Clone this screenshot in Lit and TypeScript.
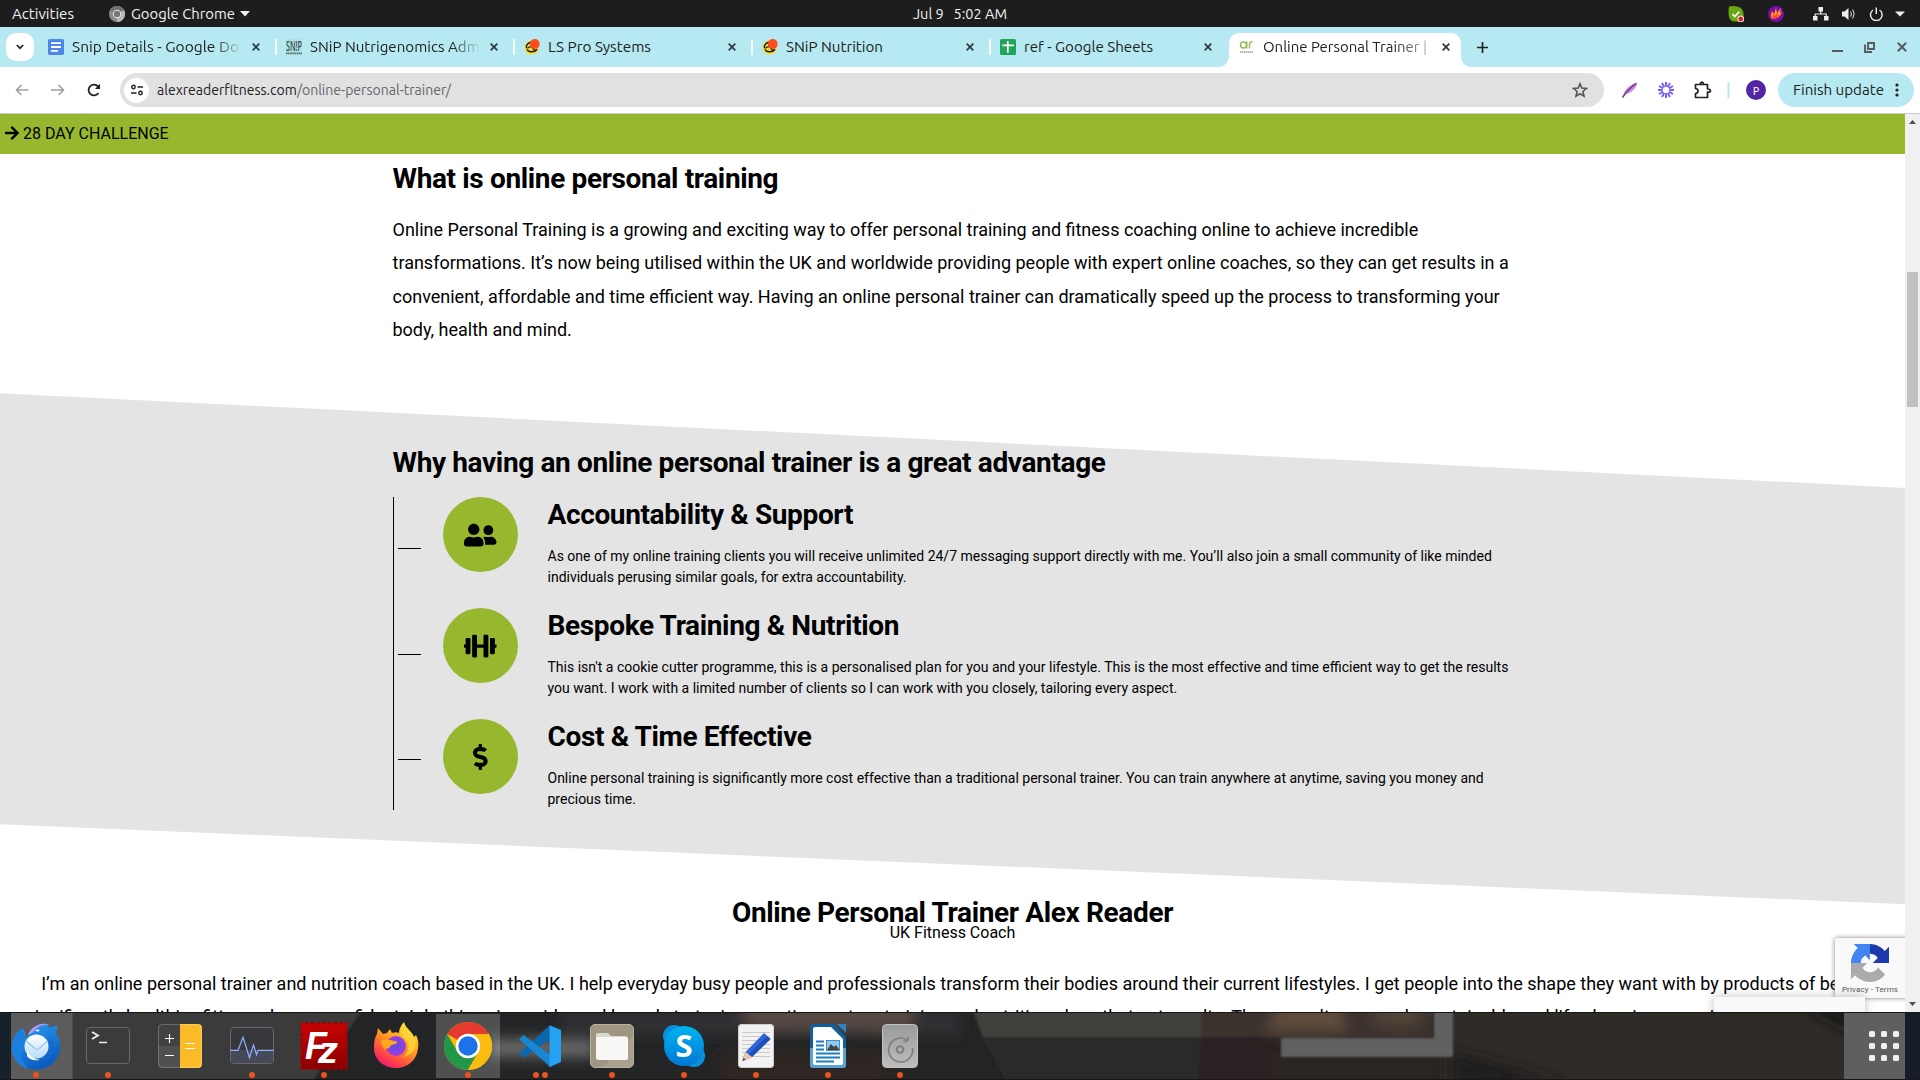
import { LitElement, html, svg, css, nothing } from "lit";
import { customElement } from "lit/decorators.js";

/* A UI label whose advance width is fixed, so the shell text keeps its metrics. */
const label = (text: string, width: number, opts: { size?: number; fill?: string; h?: number } = {}) => {
  const { size = 14.5, fill = "#202124", h = 20 } = opts;
  return html`<svg class="label" width=${width} height=${h} viewBox="0 0 ${width} ${h}">
    <text x="0" y=${h / 2 + 5} textLength=${width} lengthAdjust="spacingAndGlyphs" font-size=${size} fill=${fill} xml:space="preserve">${text}</text>
  </svg>`;
};

const icon = (w: number, h: number, vb: string, body: unknown) =>
  html`<svg class="ic" width=${w} height=${h} viewBox=${vb}>${body}</svg>`;

const closeX = (c = "#2b3a3e") =>
  icon(8, 8, "0 0 8 8", svg`<path d="M.7.7l6.6 6.6M7.3.7L.7 7.3" stroke=${c} stroke-width="1.7"/>`);

const docsIcon = icon(16, 16, "0 0 16 16", svg`<rect width="16" height="16" rx="1.5" fill="#4f86ec"/>
  <path d="M3 4.2h10M3 8h10M3 11.8h7" stroke="#fff" stroke-width="1.8"/>`);
const snipIcon = icon(16, 16, "0 0 16 16", svg`<rect width="16" height="16" fill="#a9dfd9" opacity=".6"/>
  <text x="0" y="11.5" font-size="15" font-weight="500" textLength="16" lengthAdjust="spacingAndGlyphs" fill="#32444a">SN!P</text>
  <path d="M0 14.4h16" stroke="#5b6f73" stroke-width="1.6" stroke-dasharray="1.6 .5"/>`);
const lsIcon = icon(16, 16, "0 0 16 16", svg`<circle cx="7.600" cy="8.600" r="7.200" fill="#f8dd3a"/>
  <path d="M7 3C2.500 4.500 1 8.500 3.500 9.300M3 10.500C4 13 10 14 13 10.500M4 9q3-3 5 .5t4 .5" fill="none" stroke="#1d1d1b" stroke-width="1.400"/>
  <circle cx="10.800" cy="5" r="4.900" fill="#fb4d1d"/>`);
const sheetsIcon = icon(16, 16, "0 0 16 16", svg`<rect width="16" height="16" rx="1.500" fill="#23a559"/>
  <path d="M2.500 6.300h11.500M7.800 2.300v11.500" stroke="#fff" stroke-width="1.700"/>`);
const arIcon = icon(16, 14, "0 0 16 14", svg`<circle cx="4.500" cy="5" r="3" fill="none" stroke="#9aba5a" stroke-width="1.500"/>
  <path d="M7.700 1.500v7M10.500 8.500V4q0-2.300 3-2.200" fill="none" stroke="#9aba5a" stroke-width="1.500"/>
  <path d="M1 11.900h13" stroke="#b5b5b5" stroke-width="2" stroke-dasharray="1.500 .5"/>`);

interface Tab { icon: unknown; text: string; w: number; fade?: boolean; active?: boolean; sep?: boolean }
const tabs: Tab[] = [
  { icon: docsIcon, text: "Snip Details - Google Docs", w: 181, fade: true, sep: true },
  { icon: snipIcon, text: "SNiP Nutrigenomics Admin", w: 182, fade: true, sep: true },
  { icon: lsIcon, text: "LS Pro Systems", w: 103, sep: true },
  { icon: lsIcon, text: "SNiP Nutrition", w: 97, sep: true },
  { icon: sheetsIcon, text: "ref - Google Sheets", w: 129 },
  { icon: arIcon, text: "Online Personal Trainer |", w: 164, fade: true, active: true },
];

const fa = {
  arrow: "M190.5 66.9l22.2-22.2c9.4-9.4 24.6-9.4 33.9 0L441 239c9.4 9.4 9.4 24.6 0 33.9L246.6 467.3c-9.4 9.4-24.6 9.4-33.9 0l-22.2-22.2c-9.5-9.5-9.3-25 .4-34.3L311.4 296H24c-13.3 0-24-10.7-24-24v-32c0-13.3 10.7-24 24-24h287.4L190.9 101.2c-9.8-9.3-10-24.8-.4-34.3z",
  friends: "M192 256c61.9 0 112-50.1 112-112S253.9 32 192 32 80 82.1 80 144s50.1 112 112 112zm76.8 32h-8.3c-20.8 10-43.9 16-68.5 16s-47.6-6-68.5-16h-8.3C51.6 288 0 339.6 0 403.2V432c0 26.5 21.5 48 48 48h288c26.5 0 48-21.5 48-48v-28.8c0-63.6-51.6-115.2-115.2-115.2zM480 256c53 0 96-43 96-96s-43-96-96-96-96 43-96 96 43 96 96 96zm48 32h-3.8c-13.9 4.8-28.6 8-44.2 8s-30.3-3.2-44.2-8H432c-20.4 0-39.2 5.9-55.700 15.4 24.4 26.3 39.7 61.2 39.7 99.8v38.4c0 2.200-.5 4.300-.6 6.400H592c26.5 0 48-21.5 48-48 0-61.900-50.100-112-112-112z",
  dumbbell: "M104 96H56c-13.3 0-24 10.7-24 24v104H8c-4.4 0-8 3.6-8 8v48c0 4.4 3.6 8 8 8h24v104c0 13.3 10.7 24 24 24h48c13.3 0 24-10.7 24-24V120c0-13.3-10.7-24-24-24zm528 128h-24V120c0-13.3-10.7-24-24-24h-48c-13.3 0-24 10.7-24 24v272c0 13.3 10.7 24 24 24h48c13.3 0 24-10.7 24-24V288h24c4.4 0 8-3.6 8-8v-48c0-4.4-3.6-8-8-8zM456 32h-48c-13.3 0-24 10.7-24 24v168H256V56c0-13.3-10.7-24-24-24h-48c-13.3 0-24 10.7-24 24v400c0 13.3 10.7 24 24 24h48c13.3 0 24-10.7 24-24V288h128v168c0 13.3 10.7 24 24 24h48c13.3 0 24-10.7 24-24V56c0-13.3-10.7-24-24-24z",
  dollar: "M209.2 233.4l-108-31.6C88.7 198.2 80 186.5 80 173.5c0-16.3 13.2-29.5 29.5-29.5h66.3c12.2 0 24.2 3.7 34.2 10.5 6.1 4.1 14.3 3.1 19.5-2l34.8-34c7.1-6.9 6.1-18.4-1.8-24.5C238 74.8 207.4 64.1 176 64V16c0-8.8-7.2-16-16-16h-32c-8.8 0-16 7.2-16 16v48h-2.5C45.8 64-5.4 118.7.5 183.6c4.2 46.1 39.4 83.6 83.8 96.6l102.5 30c12.5 3.7 21.2 15.3 21.2 28.3 0 16.3-13.2 29.5-29.5 29.5h-66.3C100 368 88 364.3 78 357.5c-6.1-4.1-14.3-3.1-19.5 2l-34.8 34c-7.1 6.9-6.1 18.4 1.8 24.5 24.5 19.2 55.1 29.9 86.5 30v48c0 8.8 7.2 16 16 16h32c8.8 0 16-7.2 16-16v-48.2c46.6-.9 90.3-28.6 105.7-72.7 21.5-61.6-14.6-124.8-72.5-141.7z",
};

const benefits = [
  { vb: "0 0 640 512", w: 32.5, d: fa.friends, title: "Accountability & Support",
    lines: ["As one of my online training clients you will receive unlimited 24/7 messaging support directly with me. You’ll also join a small community of like minded", "individuals perusing similar goals, for extra accountability."] },
  { vb: "0 0 640 512", w: 32.5, d: fa.dumbbell, title: "Bespoke Training & Nutrition",
    lines: ["This isn't a cookie cutter programme, this is a personalised plan for you and your lifestyle. This is the most effective and time efficient way to get the results", "you want. I work with a limited number of clients so I can work with you closely, tailoring every aspect."] },
  { vb: "0 0 288 512", w: 14.625, d: fa.dollar, title: "Cost & Time Effective",
    lines: ["Online personal training is significantly more cost effective than a traditional personal trainer. You can train anywhere at anytime, saving you money and", "precious time."] },
];

const dockIcons: { body: unknown; dots: number; cls?: string }[] = [
  { dots: 1, body: svg`<defs><linearGradient id="tb" x1="0" y1="0" x2=".5" y2="1"><stop offset="0" stop-color="#2aa3f4"/><stop offset="1" stop-color="#0b5cc0"/></linearGradient>
    <linearGradient id="tw" x1="0" y1="0" x2="0" y2="1"><stop offset="0" stop-color="#fff"/><stop offset="1" stop-color="#b5dcf8"/></linearGradient></defs>
    <path d="M16 13C20 4 29 0 37 2.500l-1 3 10-2-2 7c3 4 4 9 4 14 0 13-10 23-24 23S0 38 0 26C0 20 3 11 10 6.500c4 3 4 7 3 11z" fill="url(#tb)"/>
    <path d="M10 6.500C4 9 0 17 0 26c0 12 8 19 17 21C9 41 8 32 10 25c3-6 4-12 0-18.500z" fill="#1b7fe0"/>
    <path d="M16 13C19 4 29 0 37 2.500c-8 0-13 3-16 8z" fill="#b795ea"/>
    <circle cx="24.500" cy="24.500" r="12" fill="url(#tw)"/><path d="M14 19l9.500 8q1.500 1 3 0l9-8" fill="none" stroke="#9cc2e4" stroke-width="1.200"/>
    <path d="M15 34c3 4 7 5 13 4-6-1-10-4-13-8z" fill="#fff"/>
    <path d="M36 16c4 10 1 18-8 22 11-1 16-9 14-17z" fill="#1568cf"/><ellipse cx="25.500" cy="8.400" rx="2" ry="1" fill="#dff"/>` },
  { dots: 1, body: svg`<rect x="2.500" y="5.500" width="43" height="36" rx="3.500" fill="#3b3b3b" stroke="#696969"/>
    <path d="M8 10l6 3.500-6 3.500" fill="none" stroke="#eee" stroke-width="1.800"/><path d="M15 20.500h8" stroke="#eee" stroke-width="1.500"/>` },
  { dots: 0, body: svg`<path d="M6 2h18v44H6a4 4 0 0 1-4-4V6a4 4 0 0 1 4-4z" fill="#505050"/><path d="M6 2h18v22H2V6a4 4 0 0 1 4-4z" fill="#424242"/>
    <path d="M24 2h18a4 4 0 0 1 4 4v36a4 4 0 0 1-4 4H24z" fill="#fbbb28"/><rect x="2.500" y="2.500" width="43" height="43" rx="4" fill="none" stroke="#fff" opacity=".22"/>
    <path d="M9 16.500h9M13.500 12v9M9 33.500h9M29 21.500h10M29 26.500h10" stroke="#fff" stroke-width="1.100"/>` },
  { dots: 1, body: svg`<rect x="2.500" y="5.500" width="43" height="36" rx="3.500" fill="#37383b" stroke="#696969"/><path d="M3 28h42v10a3 3 0 0 1-3 3H6a3 3 0 0 1-3-3z" fill="#464a58"/>
    <path d="M2 28.300h8l5-13 6.500 20.500L25.500 23l3 9.500 1.500-4.200h16" fill="none" stroke="#8fb0ff" stroke-width="1.200"/>` },
  { dots: 1, body: svg`<defs><linearGradient id="fz" x1="0" y1="0" x2="0" y2="1"><stop offset="0" stop-color="#c60303"/><stop offset="1" stop-color="#8c0000"/></linearGradient></defs>
    <rect x="1" y="1" width="46" height="46" fill="url(#fz)"/><rect x="1" y="1" width="46" height="46" fill="none" stroke="#a30000" stroke-width="2.800" stroke-dasharray="0 5.750" stroke-linecap="round"/>
    <text x="5" y="37" font-size="38" font-style="italic" font-weight="700" font-family="Liberation Sans, sans-serif" textLength="22" lengthAdjust="spacingAndGlyphs" fill="#fff">F</text>
    <text x="18" y="41" font-size="37" font-style="italic" font-weight="700" font-family="Liberation Sans, sans-serif" textLength="20" lengthAdjust="spacingAndGlyphs" fill="#fff">z</text>` },
  { dots: 0, body: svg`<defs><linearGradient id="ff" x1=".8" y1="0" x2=".2" y2="1"><stop offset="0" stop-color="#ffea3a"/><stop offset=".45" stop-color="#ff9a1c"/><stop offset=".8" stop-color="#ff3b4b"/><stop offset="1" stop-color="#e5177b"/></linearGradient>
    <radialGradient id="fg"><stop offset="0" stop-color="#5a4fe0"/><stop offset="1" stop-color="#a13ae0"/></radialGradient></defs>
    <path d="M6 6l5 6 4-1 3-4 2 4c3-1 5-1 7 0 0-4 2-8 5-11 1 6 8 9 10 15l2-2c2 4 3 8 2 13-1 12-10 20-22 20C11 46 2 37 2 26c0-7 1-11 3-14z" fill="url(#ff)"/>
    <circle cx="24" cy="24" r="10" fill="url(#fg)"/><path d="M9 19c4-3 9-1 13 0 2 0 4 1 3 2-2 2-5 1-7 3-1 5-4 0-4 4C11 26 9 23 9 19z" fill="#ffa51e"/>
    <path d="M32 1c-4 7-4 12 2 17 5 6 2 14-3 17 11-2 15-11 11-20-2-5-8-8-10-14z" fill="#ffd83a" opacity=".75"/>` },
  { dots: 1, cls: "current", body: svg`<circle cx="24" cy="24" r="24" fill="#fbbc05"/>
    <path d="M24 24L3.200 12A24 24 0 0 1 44.800 12z" fill="#e53a2e"/><path d="M3.200 12A24 24 0 0 0 24 48L34.400 30 24 24 13.600 30z" fill="#249647"/>
    <path d="M24 12h20.800A24 24 0 0 1 24 48l10.400-18z" fill="#fbbc12"/><circle cx="24" cy="24" r="12.200" fill="#fff"/><circle cx="24" cy="24" r="9.700" fill="#1c73e8"/>` },
  { dots: 2, body: svg`<path d="M34 3v14L7.500 36 3 31.500z" fill="#0a66ad"/>
    <path d="M3 17L7.500 13 35 33.500V45L33 44z" fill="#1787d2"/><path d="M33.500 3.200L45 8v32l-11.500 5z" fill="#26a2f2"/>` },
  { dots: 1, body: svg`<rect x="2.500" y="2.500" width="43" height="43" rx="4.500" fill="#9e9580" stroke="#b8b19f"/><path d="M45 14L15 45h27a3 3 0 0 0 3-3z" fill="#aaa28e"/>
    <path d="M8 13a2 2 0 0 1 2-2h10l3 3h14a3 3 0 0 1 3 3v3H8z" fill="#dcd9ce"/><rect x="8" y="15" width="32" height="23" rx="2.500" fill="#f9f8f6"/>` },
  { dots: 1, body: svg`<defs><linearGradient id="sk" x1="0" y1="0" x2="0" y2="1"><stop offset="0" stop-color="#00b4f0"/><stop offset="1" stop-color="#0078d4"/></linearGradient></defs>
    <circle cx="14" cy="14" r="11" fill="#0a8fdd"/><circle cx="34" cy="34" r="11" fill="#0a8fe0"/><circle cx="24" cy="24" r="20" fill="url(#sk)"/>
    <text x="15.500" y="35" font-size="31" font-weight="700" font-family="Open Sans, sans-serif" fill="#fff">S</text>` },
  { dots: 1, body: svg`<rect x="6" y="2" width="36" height="44" rx="4" fill="#f2f2f2"/><rect x="6.500" y="2.500" width="35" height="43" rx="4" fill="none" stroke="#ccc"/>
    <path d="M10 10.500h28M10 14.500h28M10 18.500h28M10 22.500h28M10 26.500h28M10 30.500h28M10 34.500h28" stroke="#c9c9c9"/>
    <path d="M10.500 39l3-9L32 11l6.500 6L20 35z" fill="#2f66d8"/><path d="M16 33L35 14l3.500 3L20 35z" fill="#1f4fb8"/><path d="M10.500 39l3-9 6.500 5z" fill="#f0c8a0"/><path d="M10.500 39l1-3 2 1.700z" fill="#333"/>` },
  { dots: 1, body: svg`<path d="M9 2h21l12 13v28a3 3 0 0 1-3 3H9a3 3 0 0 1-3-3V5a3 3 0 0 1 3-3z" fill="#0e5f9b"/><path d="M6 26v17a3 3 0 0 0 3 3h30a3 3 0 0 0 3-3V26z" fill="#57a5d6"/>
    <path d="M11 5h16l12 12v24a2 2 0 0 1-2 2H11a2 2 0 0 1-2-2V7a2 2 0 0 1 2-2z" fill="#fff"/><path d="M33 2h9v9z" fill="#2a85bf"/>
    <path d="M12 19.500h8M12 23.500h8M12 27.500h8M12 31.500h24M12 35.500h24M12 39.500h18" stroke="#1c7fc0" stroke-width="1.800"/>
    <rect x="22.500" y="18.500" width="13" height="10" fill="#8ecbf2" stroke="#2878b0" stroke-width=".8"/><path d="M23 28l4-6 3 3 2-2 3.500 5z" fill="#444"/>` },
  { dots: 1, body: svg`<defs><linearGradient id="dk" x1="0" y1="0" x2="0" y2="1"><stop offset="0" stop-color="#9a9a9a"/><stop offset="1" stop-color="#bdbdbd"/></linearGradient></defs>
    <rect x="6.500" y="2.500" width="35" height="43" rx="4" fill="url(#dk)" stroke="#c4c4c4"/>
    <path d="M32 18.500A12 12 0 1 0 36.500 26M32 18.500l-4.500 1.300M32 18.500l.3-4" fill="none" stroke="#7d7d7d" stroke-width="1.600"/>
    <circle cx="24" cy="27.500" r="3.300" fill="none" stroke="#7d7d7d" stroke-width="2"/>` },
];

const wallpaper = svg`<defs><filter id="b" filterUnits="userSpaceOnUse" x="0" y="-40" width="1920" height="150"><feGaussianBlur stdDeviation="7"/></filter><filter id="s" filterUnits="userSpaceOnUse" x="-10" y="-40" width="1940" height="150"><feGaussianBlur stdDeviation="1.200"/></filter></defs>
  <rect width="1920" height="68" fill="#232425"/>
  <rect x="560" width="400" height="22" fill="#323334" filter="url(#b)"/>
  <path d="M-10-10H368L305 80H-10z" fill="#3b3b3b" filter="url(#s)"/>
  <rect x="490" y="27" width="105" height="18" fill="#6c6c6c" filter="url(#b)"/>
  <path d="M735-10h185l-10 30-160-2z" fill="#594a43" filter="url(#b)"/><path d="M720 40h170v40H720z" fill="#2f2623" filter="url(#b)"/>
  <path d="M970-10H1220l-12 36H983z" fill="#40413c" filter="url(#s)"/><path d="M983 26h220l-6 54H1012z" fill="#2b2b29" filter="url(#s)"/>
  <path d="M1203-10h230v36h-232z" fill="#3a322d" filter="url(#s)"/><path d="M1201 26h80v54h-80z" fill="#2a2320" filter="url(#s)"/><path d="M1270 40h180v40h-180z" fill="#2a2522"/>
  <path d="M1280-12h60l8 32h-84z" fill="#69533f" opacity=".8" filter="url(#b)"/><path d="M1375-10h45v24h-45z" fill="#534539" filter="url(#b)"/>
  <path d="M1440 0h404v68H1440z" fill="#2f2b26"/>
  <path d="M1450 40l120 32h-120z" fill="#1f1d1b" filter="url(#b)"/><path d="M1800-10h50v30z" fill="#191715" filter="url(#b)"/>
  <path d="M1281 26h153V-10h19v55h-172z" fill="#616161" filter="url(#s)"/>
  <rect x="1844" width="61" height="68" fill="#5f5f5f"/><rect x="1905" width="15" height="68" fill="#161c2a"/>
  <rect x="11" width="61.500" height="68" fill="#5c5c5c"/><rect width="11" height="68" fill="#17212b"/>
  <rect width="1920" height="1" fill="#161616"/><rect y="67" width="1920" height="1" fill="#1c1418"/>`;

@customElement("app-root")
export class AppRoot extends LitElement {
  static styles = css`
    :host { display: block; }
    * { box-sizing: border-box; margin: 0; padding: 0; }
    svg { display: block; flex: none; }
    .label { font-family: "Ubuntu", "Noto Sans", sans-serif; overflow: visible; }
    .ic { font-family: "Noto Sans", sans-serif; }
    .screen { width: 1920px; height: 1080px; display: grid; grid-template-rows: 27px 40px 47px 898px 68px; overflow: hidden; background: #fff; }
    .topbar { background: #1d1d1d; display: grid; grid-template-columns: 1fr auto 1fr; align-items: center; }
    .tl, .tr { display: flex; align-items: center; }
    .tl { padding-left: 12px; }
    .app { display: flex; align-items: center; margin-left: 35px; gap: 6px; }
    .tr { justify-content: flex-end; padding-right: 15px; }
    .tabs { background: #b6e9f1; display: flex; align-items: stretch; padding: 6px 0 0 6px; }
    .drop { width: 28px; height: 28px; border-radius: 10px; background: #fff; display: grid; place-items: center; margin-right: 4px; }
    .tab { width: 238px; padding: 0 16px 7px 10px; display: flex; align-items: center; gap: 8px; position: relative; }
    .tab .t { flex: 1; overflow: hidden; }
    .tab .t.fade { -webkit-mask-image: linear-gradient(90deg, #000 142px, transparent 170px); margin-right: -1px; }
    .tab.active .t.fade { -webkit-mask-image: linear-gradient(90deg, #000 130px, #0004 168px); }
    .tab.sep::after { content: ""; position: absolute; right: -1px; top: 6px; width: 2px; height: 16px; background: #f5fdfe; }
    .tab.active { width: 232px; margin: 0 0 0 1px; padding-left: 9.500px; padding-right: 11.500px; background: #fff; border-radius: 10px 10px 0 0; }
    .tab.active::before, .tab.active::after { content: ""; position: absolute; bottom: 0; width: 10px; height: 10px; }
    .tab.active::before { left: -10px; background: radial-gradient(circle at 0 0, transparent 9.500px, #fff 10px); }
    .tab.active::after { right: -10px; background: radial-gradient(circle at 100% 0, transparent 9.500px, #fff 10px); }
    .plus { padding: 9px 0 0 15.500px; }
    .winbtns { margin-left: auto; display: flex; gap: 21px; align-items: center; padding: 0 13px 6px 0; }
    .toolbar { background: #fff; border-bottom: 1px solid #ccc; display: flex; align-items: center; padding: 0 6px 0 15px; }
    .nav { display: flex; gap: 21px; width: 105px; align-items: center; }
    .omni { width: 1484px; height: 34px; border-radius: 17px; background: #e1e1e1; display: flex; align-items: center; padding: 0 16px 0 4px; gap: 8px; }
    .site { width: 25px; height: 25px; border-radius: 50%; background: #fff; display: grid; place-items: center; }
    .star { margin-left: auto; }
    .ext { display: flex; align-items: center; margin-left: 18px; flex: 1; }
    .avatar { width: 20px; height: 20px; border-radius: 50%; background: #5326a6; color: #fff; font: 11px "Noto Sans", sans-serif; display: grid; place-items: center; margin: 0 12px 0 16px; }
    .update { width: 136px; height: 34px; border-radius: 17px; background: #b6e9f1; display: flex; align-items: center; padding-left: 15px; gap: 11px; }
    .view { display: grid; grid-template-columns: 1905px 15px; overflow: hidden; }
    .page { position: relative; overflow: hidden; background: #fff; color: #000; font-family: Roboto, sans-serif; height: 898px; }
    .scroll { background: #f0f0f0; display: flex; flex-direction: column; align-items: center; padding: 6px 0; }
    .thumb { width: 11px; height: 135px; background: #c1c1c1; margin: 148px 0 auto; }
    .banner { height: 40px; background: #97b82e; display: flex; align-items: center; gap: 4px; padding: 0 0 2px 5px; font-size: 16px; }
    h2, h3 { font-size: 28px; line-height: 34px; font-weight: 700; white-space: nowrap; letter-spacing: -.36px; }
    .intro { padding: 8px 0 0 392.500px; }
    .intro p { margin-top: 17px; font-size: 18px; line-height: 33.300px; white-space: nowrap; }
    .why { margin-top: 47px; height: 511px; padding: 53px 0 0 392.500px; background: #e4e4e4; clip-path: polygon(0 0, 100% 94.700px, 100% 100%, 0 431px); }
    .list { margin-top: 17px; display: flex; padding-left: .5px; }
    .rail { border-left: 1px solid #000; width: 50px; height: 313px; padding: 51px 0 0 4px; display: flex; flex-direction: column; gap: 104.350px; }
    .dash { width: 23px; height: 1px; background: #000; }
    .items { display: flex; flex-direction: column; gap: 36px; }
    .item { display: flex; gap: 29.500px; height: 75px; }
    .disc { width: 75px; height: 75px; border-radius: 50%; background: #97b82e; display: grid; place-items: center; }
    .item h3 { margin-top: 1px; }
    .item p { font-size: 14px; line-height: 21px; margin-top: 13.500px; white-space: nowrap; }
    .about { margin-top: -8px; text-align: center; }
    .sub { font-size: 16px; line-height: 20px; margin-top: -7px; }
    .about p { font-size: 18px; line-height: 33.300px; white-space: nowrap; }
    .about p.first { margin-top: 24px; }
    .about p.next { text-align: left; padding-left: 25.500px; }
    .pop { position: absolute; left: 1714px; top: 883px; width: 151px; height: 60px; background: #f9f9f9; box-shadow: 0 0 9px rgba(0, 0, 0, .25); }
    .badge { position: absolute; left: 1835px; top: 824px; width: 76px; height: 60px; background: #f9f9f9; box-shadow: 0 0 5px gray; border-radius: 2px; display: flex; flex-direction: column; align-items: center; padding: 6px 6px 0 0; gap: 2px; }
    .priv { font-size: 8px; line-height: 11px; color: #555; letter-spacing: .12px; }
    .dock { position: relative; display: flex; align-items: stretch; overflow: hidden; }
    .wall { position: absolute; inset: 0; }
    .apps { position: relative; display: flex; flex: 1; }
    .cell { width: 72px; height: 68px; display: flex; flex-direction: column; align-items: center; padding-top: 10px; }
    .cell.current { background: linear-gradient(#fff3, #fff3) 4px 2px / 64px 64px no-repeat; }
    .dots { display: flex; gap: 3px; margin-top: 2px; }
    .dot { width: 6px; height: 6px; border-radius: 50%; background: #e95420; }
    .grid { position: relative; display: grid; grid-template-columns: repeat(3, 6px); gap: 6px; align-content: center; padding-right: 21px; }
    .sq { width: 6px; height: 6px; border-radius: 1.500px; background: #f0f0ee; }
  `;

  private topbar() {
    const w = { fill: "#f2f2f2" };
    return html`<div class="topbar">
      <div class="tl">${label("Activities", 62, w)}
        <div class="app">${icon(16, 16, "0 0 16 16", svg`<circle cx="8" cy="8" r="8" fill="#8c8c8c"/><path d="M8 8L15 4a8 8 0 0 1-7 12z" fill="#b9b9b9"/><path d="M8 8L1 4a8 8 0 0 1 14 0z" fill="#707070"/><circle cx="8" cy="8" r="4.200" fill="#e6e6e6"/><circle cx="8" cy="8" r="3.200" fill="#777"/>`)}
          ${label("Google Chrome", 104, w)}<svg class="ic" width="10" height="6" viewBox="1 0 10 6" overflow="visible"><path d="M0 0h10L5 5.500z" fill="#f2f2f2"/></svg></div></div>
      ${label("Jul 9   5:02 AM", 94, w)}
      <div class="tr">
        ${icon(16, 16, "0 0 16 16", svg`<path d="M1 1q2-1.500 8-.5c6 1 7 6 6.500 11Q14 16 8 15.500 2 16 1 10.500 0 5 1 1z" fill="#69a814"/><path d="M4.500 8l2.300 2.500 4.500-5" fill="none" stroke="#fff" stroke-width="1.700"/><circle cx="12.800" cy="13" r="3" fill="#e02020" stroke="#fff"/>`)}
        <svg class="ic" width="69" height="16" viewBox="0 0 69 16"><circle cx="32" cy="8" r="8" fill="#7c0da3"/><path d="M28 13c-2-3-1-5 0-8l2 3 2-6 1 5 4-5-1 5 2-1c-1 4-5 7-10 7z" fill="#ff9a1f"/><path d="M28 13c0-3 1-4 2-5l1 2 3-5-1 5 3-2c-1 3-4 5-8 5z" fill="#ff3e3e"/></svg>
        ${icon(16, 14, "0 0 16 14", svg`<path d="M5.500 0h4.500v4.500H5.500zM0 9h4.500v4.500H0zM11 9h4.500v4.500H11z" fill="#eee"/><path d="M7.700 4v3M2.200 9.500V7h11v2.500" stroke="#eee" fill="none" stroke-width="1.200"/>`)}
        <svg class="ic" width="27" height="14" viewBox="0 0 27 14"><path d="M13 4.500h2.500L19.500 1v12L15.500 9.500H13z" fill="#eee"/><path d="M21.500 4.500q1.800 2.500 0 5M23.500 2.500q3 4.500 0 9" fill="none" stroke="#ccc" stroke-width="1.100"/></svg>
        <svg class="ic" width="27" height="14" viewBox="0 0 27 14"><path d="M17 3a5.800 5.800 0 1 0 6.600 0M20.300.5V7" fill="none" stroke="#eee" stroke-width="1.400"/></svg>
        <svg class="ic" width="22" height="6" viewBox="-4 0 22 6"><path d="M8 .5h10L13 5.500z" fill="#eee"/></svg>
      </div></div>`;
  }

  private tabstrip() {
    return html`<div class="tabs">
      <div class="drop">${icon(8, 6, "0 0 8 6", svg`<path d="M.8 1L4 4.300 7.200 1" fill="none" stroke="#222" stroke-width="1.700"/>`)}</div>
      ${tabs.map((t) => html`<div class="tab ${t.active ? "active" : ""} ${t.sep ? "sep" : ""}">${t.icon}
        <div class="t ${t.fade ? "fade" : ""}">${label(t.text, t.w)}</div>${closeX()}</div>`)}
      <div class="plus">${icon(11, 11, "0 0 11 11", svg`<path d="M5.500 0v11M0 5.500h11" stroke="#222" stroke-width="1.700"/>`)}</div>
      <div class="winbtns">
        ${icon(11, 10, "0 0 11 10", svg`<path d="M0 9h11" stroke="#555c5e" stroke-width="2"/>`)}
        <svg class="ic" width="12" height="11" viewBox="0 0 12 11"><path d="M4 1h6v6H4zM1 2.500V10h7" fill="none" stroke="#555c5e" stroke-width="1.900"/></svg>
        ${icon(10, 10, "0 0 10 10", svg`<path d="M.8.8l8.400 8.400M9.200.8L.8 9.200" stroke="#555c5e" stroke-width="2"/>`)}
      </div></div>`;
  }

  private toolbar() {
    return html`<div class="toolbar">
      <div class="nav">
        ${icon(14, 12, "0 0 14 12", svg`<path d="M13.500 6H1.500M6.500 1l-5 5 5 5" fill="none" stroke="#a0a0a0" stroke-width="1.600"/>`)}
        <svg class="ic" width="16" height="12" viewBox="-1 0 16 12"><path d="M0 6h12.500M7.500 1l5 5-5 5" fill="none" stroke="#a0a0a0" stroke-width="1.600"/></svg>
        ${icon(14, 14, "0 0 14 14", svg`<path d="M11.500 10A5.400 5.400 0 1 1 11 3.400L12.500 5" fill="none" stroke="#222" stroke-width="1.800"/><path d="M13 .8V6H8z" fill="#222"/>`)}
      </div>
      <div class="omni">
        <div class="site">${icon(12, 12, "0 0 12 12", svg`<circle cx="2.500" cy="3" r="1.700" fill="none" stroke="#222" stroke-width="1.400"/><path d="M6.500 3H12M0 9h5.500" stroke="#222" stroke-width="1.500"/><circle cx="9.500" cy="9" r="1.700" fill="none" stroke="#222" stroke-width="1.400"/>`)}</div>
        <svg class="label" width="294" height="20" viewBox="0 0 294 20"><text x="0" y="15" font-size="14.500" textLength="294" lengthAdjust="spacingAndGlyphs" fill="#1f2023">alexreaderfitness.com<tspan fill="#65676a">/online-personal-trainer/</tspan></text></svg>
        <div class="star">${icon(16, 16, "0 0 16 16", svg`<path d="M8 1.800l1.800 4.300 4.600.4-3.500 3 1.100 4.600L8 11.700l-4 2.400 1.100-4.600-3.500-3 4.600-.4z" fill="none" stroke="#555" stroke-width="1.600"/>`)}</div>
      </div>
      <div class="ext">
        ${icon(16, 16, "0 0 16 16", svg`<path d="M1 15C1.500 8 8 2 15.500.5 14 7 9 11 4 12z" fill="#c48ade"/><path d="M.5 15.500C4 10 8 6 14 1.500" stroke="#6f2f96" fill="none" stroke-width="1.400"/>`)}
        <svg class="ic" width="36" height="16" viewBox="-20 0 36 16"><g stroke="#7a5cf5" stroke-width="2">${[0, 30, 60, 90, 120, 150, 180, 210, 240, 270, 300, 330].map((a) => svg`<path d="M8 0v4.700" transform="rotate(${a} 8 8)"/>`)}</g></svg>
        <svg class="ic" width="38" height="20" viewBox="-20 -2 38 20"><path d="M1.500 2.500h12v4.500q3 0 3 1.700t-3 1.500v5.300h-12v-3.800q2.500-.5 2.500-2.700T1.500 6.500zM6 2.500q.5-2.300 1.900-2.300T9.800 2.500z" fill="none" stroke="#222" stroke-width="1.700" stroke-linejoin="round"/></svg>
        <svg class="ic" width="18" height="16" viewBox="-8 0 18 16"><path d="M8.500 0v16" stroke="#b6e9f1" stroke-width="2"/></svg>
        <div class="avatar">P</div>
        <div class="update">${label("Finish update", 91)}${icon(4, 14, "0 0 4 14", svg`<circle cx="2" cy="2" r="1.600" fill="#222"/><circle cx="2" cy="7" r="1.600" fill="#222"/><circle cx="2" cy="12" r="1.600" fill="#222"/>`)}</div>
      </div></div>`;
  }

  private page() {
    return html`<div class="page">
      <div class="banner">${icon(14, 16, "0 0 448 512", svg`<path d=${fa.arrow}/>`)}<span>28 DAY CHALLENGE</span></div>
      <section class="intro"><h2>What is online personal training</h2>
        <p>Online Personal Training is a growing and exciting way to offer personal training and fitness coaching online to achieve incredible<br>transformations. It’s now being utilised within the UK and worldwide providing people with expert online coaches, so they can get results in a<br>convenient, affordable and time efficient way. Having an online personal trainer can dramatically speed up the process to transforming your<br>body, health and mind.</p></section>
      <section class="why"><h2>Why having an online personal trainer is a great advantage</h2>
        <div class="list">
          <div class="rail"><div class="dash"></div><div class="dash"></div><div class="dash"></div></div>
          <div class="items">${benefits.map((b) => html`<div class="item">
            <div class="disc">${icon(b.w, 26, b.vb, svg`<path d=${b.d}/>`)}</div>
            <div><h3>${b.title}</h3><p>${b.lines[0]}<br>${b.lines[1]}</p></div></div>`)}</div>
        </div></section>
      <section class="about"><h2>Online Personal Trainer Alex Reader</h2><div class="sub">UK Fitness Coach</div>
        <p class="first">I’m an online personal trainer and nutrition coach based in the UK. I help everyday busy people and professionals transform their bodies around their current lifestyles. I get people into the shape they want with by products of being</p>
        <p class="next">significantly healthier, fitter and more confident. I do this using evidenced based strategies, creative custom training and nutrition plans that get results. These results are made sustainable and life changing, meaning they can be</p></section>
      <div class="badge">${icon(38, 38, "0 0 64 64", svg`<path fill="#1c3aa9" d="M64 31.955l-.033-1.370V4.687l-7.160 7.160C50.948 4.674 42.033.093 32.050.093c-10.400 0-19.622 4.960-25.458 12.640l11.736 11.860a15.550 15.550 0 0 1 4.754-5.334c2.050-1.600 4.952-2.906 8.968-2.906.485 0 .860.057 1.135.163 4.976.393 9.288 3.140 11.828 7.124l-8.307 8.307L64 31.953"/><path fill="#4285f4" d="M31.862.094l-1.370.033H4.594l7.160 7.160C4.580 13.147 0 22.060 0 32.046c0 10.400 4.960 19.622 12.640 25.458L24.500 45.768a15.560 15.560 0 0 1-5.334-4.754c-1.600-2.050-2.906-4.952-2.906-8.968 0-.485.057-.860.163-1.135.393-4.976 3.140-9.288 7.124-11.828l8.307 8.307L31.860.095"/><path fill="#ababab" d="M.001 32.045l.033 1.370v25.898l7.160-7.160c5.860 7.173 14.774 11.754 24.760 11.754 10.400 0 19.622-4.960 25.458-12.640l-11.736-11.860a15.550 15.550 0 0 1-4.754 5.334c-2.050 1.600-4.952 2.906-8.968 2.906-.485 0-.860-.057-1.135-.163-4.976-.393-9.288-3.140-11.828-7.124l8.307-8.307c-10.522.040-22.400.066-27.295-.005"/>`)}
        <span class="priv">Privacy - Terms</span></div>
      <div class="pop"></div>
    </div>`;
  }

  render() {
    return html`<div class="screen">${this.topbar()}${this.tabstrip()}${this.toolbar()}
      <div class="view">${this.page()}
        <div class="scroll">${icon(7, 4, "0 0 7 4", svg`<path d="M3.500 0L7 4H0z" fill="#505050"/>`)}<div class="thumb"></div>${icon(7, 4, "0 0 7 4", svg`<path d="M0 0h7L3.500 4z" fill="#505050"/>`)}</div></div>
      <div class="dock"><svg class="wall" width="1920" height="68" viewBox="0 0 1920 68">${wallpaper}</svg>
        <div class="apps">${dockIcons.map((d) => html`<div class="cell ${d.cls ?? ""}">${icon(48, 48, "0 0 48 48", d.body)}
          ${d.dots ? html`<div class="dots">${Array.from({ length: d.dots }, () => html`<div class="dot"></div>`)}</div>` : nothing}</div>`)}</div>
        <div class="grid">${Array.from({ length: 9 }, () => html`<div class="sq"></div>`)}</div></div>
    </div>`;
  }
}
